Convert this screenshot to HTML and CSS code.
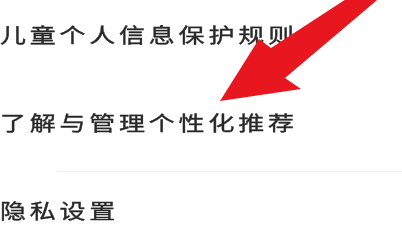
FILE: index.html
```html
<!DOCTYPE html>
<html lang="zh-CN">
<head>
<meta charset="utf-8">
<title>设置</title>
<link rel="stylesheet" href="styles.css">
</head>
<body>
<div class="screen">
  <ul class="list">
    <li class="item"><span class="label">儿童个人信息保护规则</span></li>
    <li class="item"><span class="label">了解与管理个性化推荐</span></li>
    <li class="divider"></li>
    <li class="item item--last"><span class="label">隐私设置</span></li>
  </ul>
  <svg class="arrow" viewBox="0 0 402 244" width="402" height="244" aria-hidden="true">
    <polygon points="220,101 259,39 271,48 360,-10 389,-10 285,78 301,89" fill="#e8161e"/>
  </svg>
</div>
</body>
</html>
```

FILE: styles.css
```css
html, body {
  margin: 0;
  padding: 0;
  background: #ffffff;
}

.screen {
  position: relative;
  width: 402px;
  height: 244px;
  overflow: hidden;
  background: #ffffff;
  font-family: "Noto Sans CJK SC", "Noto Sans", sans-serif;
}

.list {
  list-style: none;
  margin: -5px 0 0 0;
  padding: 0;
  filter: blur(0.55px);
}

.item {
  padding: 30px 0 38px;
  line-height: 20px;
  height: 20px;
}

.item--last {
  padding-top: 29px;
}

.divider {
  height: 1px;
  margin-left: 57px;
  background: #efefef;
}

.label {
  display: inline-block;
  white-space: nowrap;
  font-size: 20px;
  letter-spacing: 2.9px;
  color: #282828;
  -webkit-text-stroke: 0.35px #282828;
  transform: scaleX(1.3);
  transform-origin: left center;
}

.arrow {
  position: absolute;
  top: 0;
  left: 0;
  filter: blur(0.6px);
}
```
